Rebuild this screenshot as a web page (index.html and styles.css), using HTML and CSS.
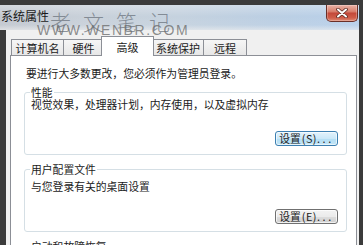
FILE: index.html
```html
<!DOCTYPE html>
<html lang="zh-CN">
<head>
<meta charset="utf-8">
<title>系统属性</title>
<link rel="stylesheet" href="styles.css">
</head>
<body>
<div class="frame">
  <div class="titlebar">
    <span class="title">系统属性</span>
    <button class="close" aria-label="关闭">
      <svg width="12" height="10" viewBox="0 0 12 10">
        <path d="M2 1.5 L10 8.5 M10 1.5 L2 8.5" stroke="#5a2a22" stroke-width="3.6" stroke-linecap="round" fill="none"/>
        <path d="M2 1.5 L10 8.5 M10 1.5 L2 8.5" stroke="#ffffff" stroke-width="2" stroke-linecap="round" fill="none"/>
      </svg>
    </button>
  </div>
  <div class="client">
    <div class="tabs">
      <div class="tab tab-name">计算机名</div>
      <div class="tab tab-hw">硬件</div>
      <div class="tab tab-adv selected">高级</div>
      <div class="tab tab-prot">系统保护</div>
      <div class="tab tab-remote">远程</div>
    </div>
    <div class="panel">
      <p class="intro">要进行大多数更改，您必须作为管理员登录。</p>
      <fieldset class="group">
        <legend>性能</legend>
        <p class="group-text">视觉效果，处理器计划，内存使用，以及虚拟内存</p>
        <div class="actions"><button class="btn btn-default">设置<span class="latin">(S)</span><span class="dots">...</span></button></div>
      </fieldset>
      <fieldset class="group group-profile">
        <legend>用户配置文件</legend>
        <p class="group-text">与您登录有关的桌面设置</p>
        <div class="actions"><button class="btn">设置<span class="latin">(E)</span><span class="dots">...</span></button></div>
      </fieldset>
      <fieldset class="group group-start">
        <legend>启动和故障恢复</legend>
        <p class="group-text">系统启动、系统失败和调试信息</p>
        <div class="actions"><button class="btn">设置<span class="latin">(T)</span><span class="dots">...</span></button></div>
      </fieldset>
    </div>
  </div>
  <div class="wm-cn">老文笔记</div>
  <div class="wm-en">WWW.WENBR.COM</div>
</div>
</body>
</html>
```
FILE: styles.css
```css
* { box-sizing: border-box; }

body {
  margin: 0;
  background: #3d3d3d;
  overflow: hidden;
}

.frame {
  position: relative;
  width: 363px;
  height: 245px;
  padding-top: 5px;
  background: #3b3b3b;
  display: flex;
  flex-direction: column;
  overflow: hidden;
  font-family: "Noto Sans CJK SC", sans-serif;
  color: #1b1b1b;
}

.titlebar {
  flex: none;
  width: 359px;
  height: 25px;
  display: flex;
  align-items: flex-start;
  background:
    linear-gradient(to bottom, rgba(255,255,255,0.28), rgba(255,255,255,0) 45%, rgba(255,255,255,0.05) 80%, rgba(240,240,240,0.6)),
    linear-gradient(to right, #c3c8d0 0%, #c9d1da 25%, #c5d2df 50%, #bccfe3 75%, #b8d0ea 100%);
}

.title {
  margin: 4px 0 0 1px;
  font-size: 12px;
  line-height: 14px;
  color: #1a1a1a;
}

.close {
  margin-left: auto;
  margin-right: 1px;
  width: 32px;
  height: 17px;
  padding: 0;
  border: 1px solid #6a2f27;
  border-top: 0;
  border-radius: 0 0 5px 5px;
  background: linear-gradient(to bottom, #eab2a6 0%, #d9816f 40%, #c4493a 52%, #cf5d49 80%, #de8a73 100%);
  box-shadow: inset 0 0 0 1px rgba(255,255,255,0.25);
  display: flex;
  align-items: center;
  justify-content: center;
}

.client {
  flex: 1;
  min-height: 0;
  width: 353px;
  margin-left: 6px;
  padding: 6px 2px 0 4px;
  background: #f0f0f0;
  display: flex;
  flex-direction: column;
}

.tabs {
  flex: none;
  display: flex;
  align-items: flex-end;
  padding-left: 1px;
}

.tab {
  height: 16px;
  padding-top: 2px;
  border: 1px solid #8c8f96;
  border-bottom: 0;
  border-right: 0;
  background: linear-gradient(to bottom, #f6f6f6, #e7e7e7);
  font-size: 11px;
  line-height: 13px;
  text-align: center;
  white-space: nowrap;
}

.tab-name { width: 52px; }
.tab-hw { width: 40px; }
.tab-prot { width: 51px; }
.tab-remote { width: 44px; border-right: 1px solid #8c8f96; }

.tab.selected {
  position: relative;
  z-index: 1;
  width: 53px;
  height: 20px;
  margin: 0 -2px -1px;
  padding-top: 4px;
  border-right: 1px solid #8c8f96;
  background: #ffffff;
}

.panel {
  flex: 1;
  border: 1px solid #8c8f96;
  background: #ffffff;
  padding: 10px 9px 0 13px;
}

.intro {
  margin: 0 0 6px 2px;
  font-size: 10.8px;
  line-height: 14px;
  white-space: nowrap;
}

.group {
  margin: 0 0 8px;
  min-width: 0;
  padding: 0 8px 8px 6px;
  border: 1px solid #d5dfe5;
  border-radius: 3px;
}

.group legend {
  margin-left: -1px;
  padding: 0 1px;
  font-size: 10.8px;
  line-height: 12px;
}

.group-text {
  margin: 0;
  font-size: 10.8px;
  line-height: 12px;
  white-space: nowrap;
}

.actions {
  display: flex;
  justify-content: flex-end;
  margin-top: 21px;
}

.group-profile { padding-bottom: 7px; }
.group-profile .group-text { margin-top: 5px; }
.group-profile .actions { margin-top: 17px; }

.group-start .group-text { margin-top: 5px; }

.btn {
  width: 63px;
  height: 15px;
  padding: 0;
  border: 1px solid #707070;
  border-radius: 3px;
  background: linear-gradient(to bottom, #f3f3f3 0%, #ebebeb 50%, #dddddd 51%, #cfcfcf 100%);
  box-shadow: inset 0 0 0 1px rgba(255,255,255,0.7);
  font-family: "Noto Sans CJK SC", sans-serif;
  font-size: 10.8px;
  line-height: 13px;
  color: #1b1b1b;
  white-space: nowrap;
}

.btn-default {
  border-color: #3c7fb1;
  background: linear-gradient(to bottom, #e3f3fc 0%, #cbe8f8 50%, #b3def4 51%, #c3e5f7 100%);
  box-shadow: inset 0 0 0 1px rgba(255,255,255,0.6);
}

.latin { margin-left: 1px; letter-spacing: 0.5px; }
.dots { letter-spacing: 2.6px; }

.wm-cn {
  position: absolute;
  left: 50px;
  top: 11px;
  font-size: 21px;
  line-height: 1;
  letter-spacing: 12px;
  font-weight: 300;
  color: rgba(108, 116, 126, 0.75);
  white-space: nowrap;
  pointer-events: none;
}

.wm-en {
  position: absolute;
  z-index: 2;
  left: 37px;
  top: 23px;
  font-family: "Liberation Sans", sans-serif;
  font-weight: 400;
  font-size: 14px;
  line-height: 1;
  letter-spacing: 1.6px;
  color: rgba(105, 105, 105, 0.75);
  white-space: nowrap;
  pointer-events: none;
}
```
